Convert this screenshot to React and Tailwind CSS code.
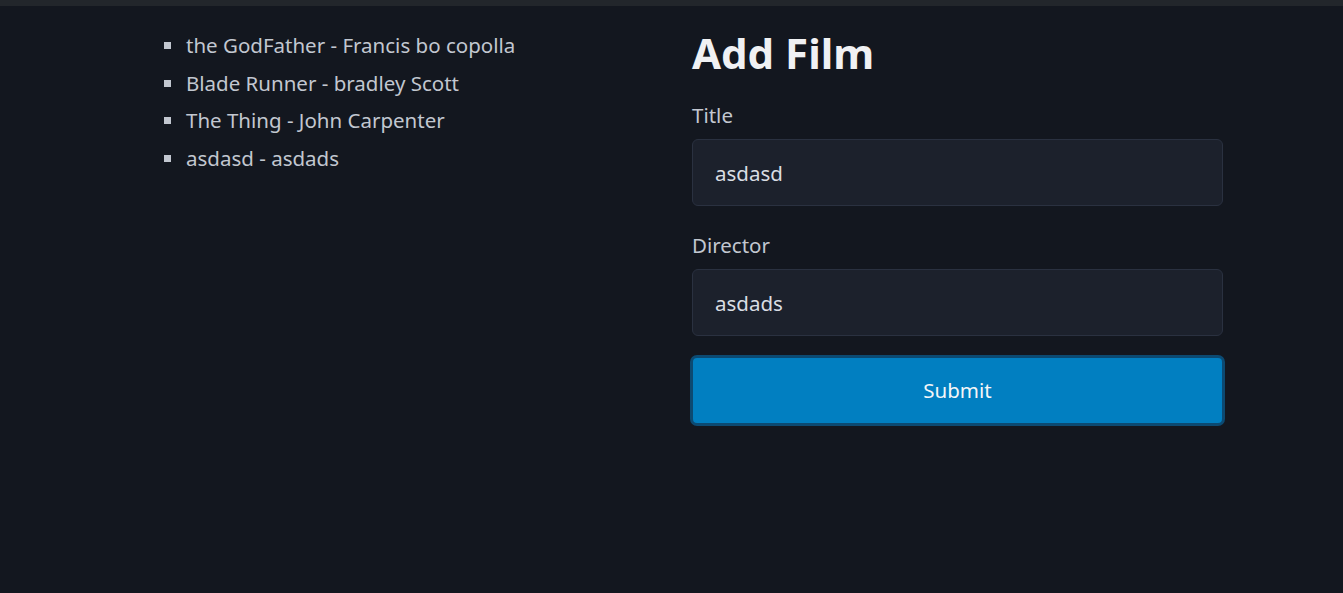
import React, { useState } from 'react'

const films = [
  { title: 'the GodFather', director: 'Francis bo copolla' },
  { title: 'Blade Runner', director: 'bradley Scott' },
  { title: 'The Thing', director: 'John Carpenter' },
  { title: 'asdasd', director: 'asdads' },
]

const App = () => {
  const [title, setTitle] = useState('asdasd')
  const [director, setDirector] = useState('asdads')

  return (
    <div
      className="min-h-[593px] w-full bg-[#13171f] text-[#c2c7d0]"
      style={{ fontFamily: '"Noto Sans", "Open Sans", sans-serif' }}
    >
      <div className="h-[6px] w-full bg-[#22262b]" />
      <div className="flex pl-[164px]">
        <ul className="w-[528px] pt-[21px]">
          {films.map((f, i) => (
            <li key={i} className="flex items-center text-[20.5px] leading-[37.5px]">
              <span className="mr-[15px] inline-block h-[7px] w-[7px] bg-[#c2c7d0]" />
              {f.title} - {f.director}
            </li>
          ))}
        </ul>

        <form className="w-[531px] pt-[19px]" onSubmit={(e) => e.preventDefault()}>
          <h1 className="text-[42px] font-bold leading-[56px] text-[#f0f1f3]">Add Film</h1>
          <label className="mt-[18px] block text-[20.5px] leading-[32px]">Title</label>
          <input
            value={title}
            onChange={(e) => setTitle(e.target.value)}
            className="mt-[8px] block h-[67px] w-full rounded-[6px] border border-[#2a3140] bg-[#1c212c] px-[22px] text-[20.5px] text-[#d9dde3] outline-none"
          />
          <label className="mt-[23px] block text-[20.5px] leading-[32px]">Director</label>
          <input
            value={director}
            onChange={(e) => setDirector(e.target.value)}
            className="mt-[8px] block h-[67px] w-full rounded-[6px] border border-[#2a3140] bg-[#1c212c] px-[22px] text-[20.5px] text-[#d9dde3] outline-none"
          />
          <button
            type="submit"
            className="-ml-[2px] mt-[19px] block h-[71px] w-[535px] rounded-[7px] border-[3px] border-[#0c4a72] bg-[#017fc1] text-[20.5px] text-[#f4f6f8]"
          >
            Submit
          </button>
        </form>
      </div>
    </div>
  )
}

export default App
